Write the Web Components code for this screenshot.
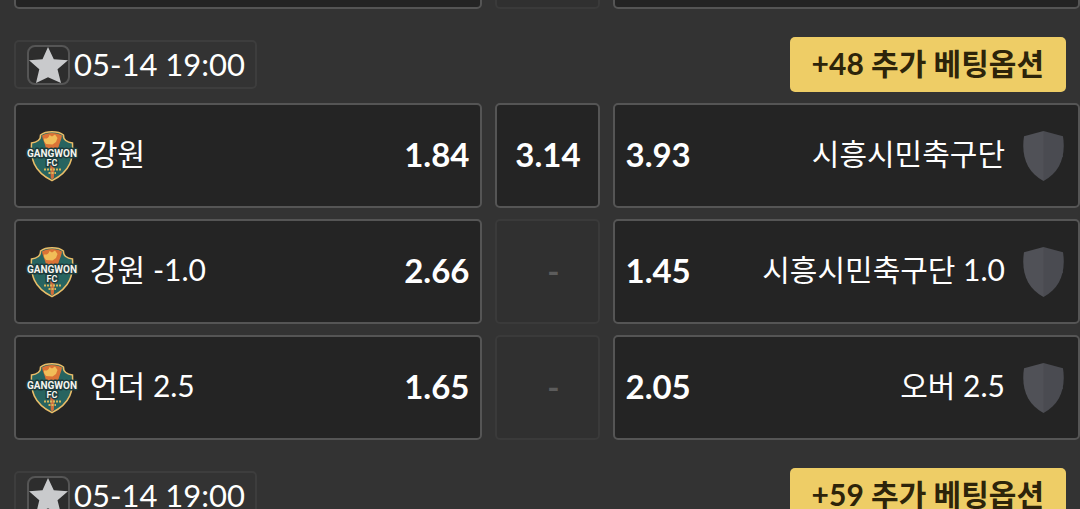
<!DOCTYPE html>
<html lang="ko">
<head>
<meta charset="utf-8">
<meta name="viewport" content="width=device-width, initial-scale=1">
<title>Betting</title>
<style>
  * {
    box-sizing: border-box;
  }
  body {
    margin: 0;
    height: 100vh;
    overflow: hidden;
    background: #333;
    color: #fff;
    font-family: Lato, "Noto Sans CJK KR", sans-serif;
  }
</style>
</head>
<body>
<odds-board>
  <match-row slot="previous">
    <odds-cell slot="home"></odds-cell>
    <odds-cell slot="draw" empty></odds-cell>
    <odds-cell slot="away"></odds-cell>
  </match-row>

  <match-header date="05-14 19:00">+48 추가 베팅옵션</match-header>
  <match-row>
    <odds-cell slot="home" side="home" odds="1.84">강원</odds-cell>
    <odds-cell slot="draw" odds="3.14"></odds-cell>
    <odds-cell slot="away" side="away" odds="3.93">시흥시민축구단</odds-cell>
  </match-row>
  <match-row>
    <odds-cell slot="home" side="home" odds="2.66">강원 -1.0</odds-cell>
    <odds-cell slot="draw" odds="-" empty></odds-cell>
    <odds-cell slot="away" side="away" odds="1.45">시흥시민축구단 1.0</odds-cell>
  </match-row>
  <match-row>
    <odds-cell slot="home" side="home" odds="1.65">언더 2.5</odds-cell>
    <odds-cell slot="draw" odds="-" empty></odds-cell>
    <odds-cell slot="away" side="away" odds="2.05">오버 2.5</odds-cell>
  </match-row>

  <match-header date="05-14 19:00">+59 추가 베팅옵션</match-header>
</odds-board>

<script>
class OddsBoard extends HTMLElement {
  constructor() {
    super();
    this.attachShadow({ mode: "open" });
    this.shadowRoot.innerHTML = `
    <style>
      :host {
        display: block;
      }
      /* only the bottom edge of the row scrolled past stays in view */
      .previous {
        display: flex;
        flex-direction: column;
        justify-content: flex-end;
        height: 9px;
        overflow: hidden;
      }
      .list {
        display: flex;
        flex-direction: column;
        gap: 11px;
      }
    </style>
    <div class="previous"><slot name="previous"></slot></div>
    <div class="list"><slot></slot></div>`;
  }
}

class MatchHeader extends HTMLElement {
  constructor() {
    super();
    this.attachShadow({ mode: "open" });
    this.render();
  }

  render() {
    this.shadowRoot.innerHTML = `
    <style>
      * {
        box-sizing: border-box;
      }
      :host {
        display: flex;
        align-items: center;
        justify-content: space-between;
        padding: 28px 14px 0;
      }
      :host(:not(:first-of-type)) {
        padding-top: 17px;
      }
      .date {
        display: flex;
        align-items: center;
        gap: 4px;
        height: 49px;
        padding: 0 10px 0 11px;
        border: 2px solid #3d3d3d;
        border-radius: 5px;
        font-size: 31px;
        line-height: 40px;
        white-space: nowrap;
      }
      time {
        padding-bottom: 2px;
      }
      .star {
        display: flex;
        align-items: center;
        justify-content: center;
        width: 43px;
        height: 40px;
        padding: 0;
        border: 2px solid #555;
        border-radius: 8px;
        background: #2d2d2d;
      }
      .star svg {
        flex: none;
      }
      .more {
        height: 55px;
        padding: 0 22px 4px;
        border: 0;
        border-radius: 5px;
        background: #eecd66;
        color: #2d240a;
        font-family: inherit;
        font-size: 30px;
        font-weight: 700;
        line-height: 40px;
        white-space: nowrap;
      }
    </style>
    <div class="date">
      <button class="star" aria-label="즐겨찾기">
        <svg width="39" height="36" viewBox="0 0 39 36">
          <path fill="#c9cacc" d="M19 0L24.800 12.300L39 13.300L28.500 22.300L32 36L19 30.300L7 36L10.300 22.300L0 13.300L13.500 12.300Z"/>
        </svg>
      </button>
      <time>${this.getAttribute("date")}</time>
    </div>
    <button class="more"><slot></slot></button>`;
  }
}

class MatchRow extends HTMLElement {
  constructor() {
    super();
    this.attachShadow({ mode: "open" });
    this.shadowRoot.innerHTML = `
    <style>
      :host {
        display: grid;
        grid-template-columns: minmax(0, 1fr) 105px minmax(0, 1fr);
        gap: 13px;
        padding-left: 14px;
      }
    </style>
    <slot name="home"></slot>
    <slot name="draw"></slot>
    <slot name="away"></slot>`;
  }
}

class OddsCell extends HTMLElement {
  constructor() {
    super();
    this.attachShadow({ mode: "open" });
    this.render();
  }

  render() {
    const side = this.getAttribute("side");
    const odds = `<b>${this.getAttribute("odds") ?? ""}</b>`;
    const name = `<span class="name"><slot></slot></span>`;
    let content = odds;
    if (side === "home") content = `<team-crest></team-crest>${name}${odds}`;
    if (side === "away") content = `${odds}${name}<team-shield></team-shield>`;

    this.shadowRoot.innerHTML = `
    <style>
      :host {
        display: block;
      }
      button {
        box-sizing: border-box;
        display: flex;
        align-items: center;
        justify-content: center;
        gap: 14px;
        width: 100%;
        height: 105px;
        padding: 0 10px 0 12px;
        border: 2px solid #555;
        border-radius: 5px;
        background: #242424;
        color: #fff;
        font-family: inherit;
        font-size: 30px;
        line-height: 40px;
        white-space: nowrap;
      }
      b {
        padding-bottom: 4px;
        font-size: 33px;
        font-weight: 700;
      }
      .name {
        flex: 1;
        padding-bottom: 6px;
        text-align: left;
      }
      :host([side="away"]) button {
        padding: 0 11px;
      }
      :host([side="away"]) .name {
        text-align: right;
      }
      :host([empty]) button {
        justify-content: flex-end;
        padding-right: 38px;
        border-color: #3a3a3a;
        background: #303030;
        color: #5c5c5c;
      }
    </style>
    <button>${content}</button>`;
  }
}

class TeamCrest extends HTMLElement {
  constructor() {
    super();
    this.attachShadow({ mode: "open" });
    this.shadowRoot.innerHTML = `
    <style>
      :host {
        display: block;
        flex: none;
        width: 48px;
        height: 52px;
      }
      svg {
        display: block;
        overflow: visible;
      }
      text {
        font-family: Roboto, "Liberation Sans", sans-serif;
        font-weight: 700;
        text-anchor: middle;
        fill: #f4f4ee;
        stroke: #1d3b3c;
        stroke-width: 3;
        stroke-linejoin: round;
        paint-order: stroke;
      }
    </style>
    <svg width="48" height="52" viewBox="0 0 48 52" aria-hidden="true">
      <path fill="#276460" stroke="#e9bd68" stroke-width="1.5" d="M24 1.800C19 1.800 15 3 12.500 5C13 9.500 9 12.500 3.500 13C2.500 28 5 41 24 50.600C43 41 45.500 28 44.500 13C39 12.500 35 9.500 35.500 5C33 3 29 1.800 24 1.800Z"/>
      <path fill="#db7336" d="M14 5.500C19 2 29 2 34 5.500C33.500 10 31 14 30 19H18C17.500 14 14.500 10 14 5.500Z"/>
      <path fill="#f1bd58" d="M16 8.500C19 9 20.500 8 21.500 5L24 6.500L27 4.500L29.500 8L28 12L24.500 14.500L18 14L16 11Z"/>
      <path fill="#d16e3c" d="M22 30H27L25.800 48L24 49.500L22.800 48Z"/>
      <path stroke="#d6b65b" stroke-width="1.800" stroke-dasharray="2 1" d="M16 39.500H33M20.500 43H28"/>
      <text x="24" y="35.500" font-size="9">FC</text>
      <text x="24" y="26.500" font-size="10">GANGWON</text>
    </svg>`;
  }
}

class TeamShield extends HTMLElement {
  constructor() {
    super();
    this.attachShadow({ mode: "open" });
    this.shadowRoot.innerHTML = `
    <style>
      :host {
        display: flex;
        flex: none;
        justify-content: center;
        width: 48px;
      }
    </style>
    <svg width="41" height="50" viewBox="0 0 41 50" aria-hidden="true">
      <path fill="#505157" d="M20.500 0L1 5.200C-2 25 4 41 20.500 50L40 25Z"/>
      <path fill="#4a4b51" d="M20.500 0L40 5.200C43 25 37 41 20.500 50Z"/>
    </svg>`;
  }
}

customElements.define("team-crest", TeamCrest);
customElements.define("team-shield", TeamShield);
customElements.define("odds-cell", OddsCell);
customElements.define("match-row", MatchRow);
customElements.define("match-header", MatchHeader);
customElements.define("odds-board", OddsBoard);
</script>
</body>
</html>
